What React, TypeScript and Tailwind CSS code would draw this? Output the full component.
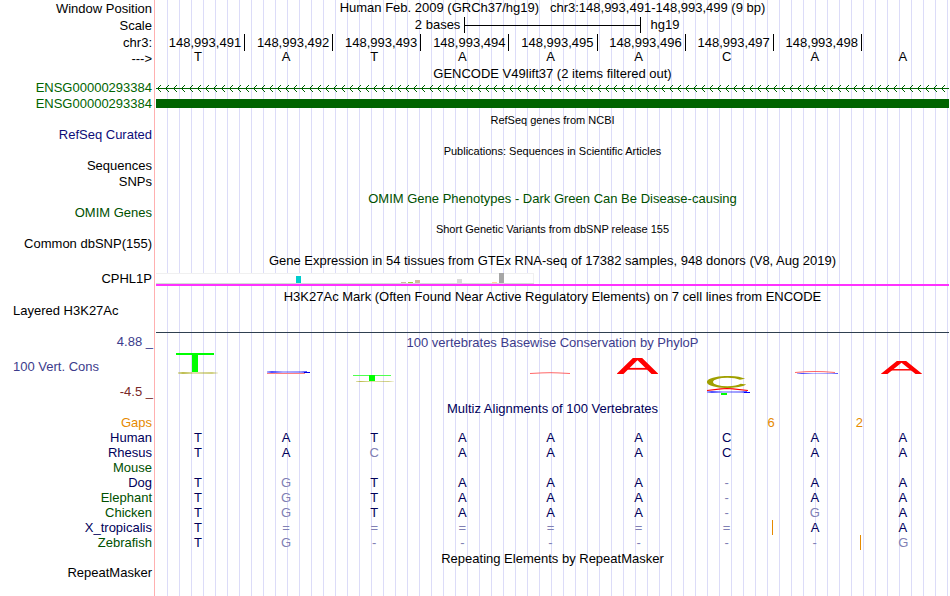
import React from 'react';
import clsx from 'clsx';

const POSITIONS = [
  '148,993,491',
  '148,993,492',
  '148,993,493',
  '148,993,494',
  '148,993,495',
  '148,993,496',
  '148,993,497',
  '148,993,498',
  '',
];

const REFERENCE = 'TATAAACAA';

interface Species {
  name: string;
  color: string;
  bases: string;
  // index of the base that is followed by an insertion
  insertAfter?: number;
}

const NAVY = 'text-[#00005a]';
const GREEN = 'text-[#005000]';

const SPECIES: Species[] = [
  { name: 'Human', color: NAVY, bases: 'TATAAACAA' },
  { name: 'Rhesus', color: NAVY, bases: 'TACAAACAA' },
  { name: 'Mouse', color: GREEN, bases: '         ' },
  { name: 'Dog', color: NAVY, bases: 'TGTAAA-AA' },
  { name: 'Elephant', color: GREEN, bases: 'TGTAAA-AA' },
  { name: 'Chicken', color: GREEN, bases: 'TGTAAA-GA' },
  { name: 'X_tropicalis', color: NAVY, bases: 'T======AA', insertAfter: 6 },
  { name: 'Zebrafish', color: GREEN, bases: 'TG------G', insertAfter: 7 },
];

const GAPS = ['', '', '', '', '', '', '6', '2', ''];

interface TrackProps {
  label: string;
  color?: string;
  className?: string;
  children?: React.ReactNode;
}

const Track: React.FC<TrackProps> = ({ label, color, className, children }) => (
  <div className={clsx('flex', className ?? 'h-4 leading-4')}>
    <div className={clsx('w-[156px] shrink-0 pr-1 text-right', color)}>
      {label}
    </div>
    <div className="min-w-0 flex-1">{children}</div>
  </div>
);

interface TitleProps {
  small?: boolean;
  color?: string;
  children: React.ReactNode;
}

const Title: React.FC<TitleProps> = ({ small, color, children }) => (
  <h2
    className={clsx(
      'ml-[156px] h-[15px] text-center leading-[17px] whitespace-nowrap',
      small && 'text-[11px]',
      color
    )}
  >
    {children}
  </h2>
);

const StrandLine = () => (
  <svg className="block h-4 w-full" shapeRendering="crispEdges">
    <defs>
      <pattern id="strand" width="8" height="16" patternUnits="userSpaceOnUse">
        <g fill="#006400">
          <rect x="0" y="8" width="8" height="1" />
          <rect x="2" y="7" width="1" height="1" />
          <rect x="2" y="9" width="1" height="1" />
          <rect x="3" y="6" width="1" height="1" />
          <rect x="3" y="10" width="1" height="1" />
          <rect x="4" y="5" width="1" height="1" />
          <rect x="4" y="11" width="1" height="1" />
        </g>
      </pattern>
    </defs>
    <rect width="100%" height="16" fill="url(#strand)" />
  </svg>
);

const ExpressionBars = () => (
  <svg
    className="block h-[11px] w-[378px]"
    viewBox="0 0 378 11"
    shapeRendering="crispEdges"
  >
    <rect width="378" height="11" fill="#f0f0f0" />
    <rect y="1" width="377" height="9" fill="#ffffff" />
    <rect y="10" width="378" height="1" fill="#d4dcd4" />
    <rect x="140" y="3" width="5" height="7" fill="#00cdcd" />
    <rect x="245" y="9" width="5" height="1" fill="#cdb79e" />
    <rect x="252" y="9" width="5" height="1" fill="#9acd32" />
    <rect x="259" y="7" width="5" height="3" fill="#cdb79e" />
    <rect x="301" y="6" width="5" height="4" fill="#d9d9d9" />
    <rect x="336" y="9" width="5" height="1" fill="#ffd39b" />
    <rect x="343" y="0" width="5" height="10" fill="#a6a6a6" />
  </svg>
);

interface PeakProps {
  x: number;
  y: number;
  height: number;
}

const Peak: React.FC<PeakProps> = ({ x, y, height }) => (
  <svg
    x={x}
    y={y}
    width="41"
    height={height}
    viewBox="0 0 16 16"
    preserveAspectRatio="none"
  >
    <g fill="none" stroke="#ff0000">
      <polyline points="0.8,17 7.2,0.8 8.8,0.8 15.2,17" strokeWidth="2.5" />
      <line x1="4" y1="10.8" x2="12" y2="10.8" strokeWidth="1.8" />
    </g>
  </svg>
);

// x starts at the left edge of the first base, y just under the title
const Conservation = () => (
  <svg
    className="block h-[50px] w-full"
    viewBox="0 0 793 50"
    preserveAspectRatio="none"
  >
    <defs>
      <linearGradient id="olive">
        <stop offset="0" stopColor="#a0a000" stopOpacity="0.3" />
        <stop offset="0.12" stopColor="#a0a000" stopOpacity="0.7" />
        <stop offset="0.4" stopColor="#a0a000" stopOpacity="0.3" />
        <stop offset="0.85" stopColor="#a0a000" stopOpacity="0.5" />
        <stop offset="1" stopColor="#a0a000" stopOpacity="0.1" />
      </linearGradient>
      <linearGradient id="blue">
        <stop offset="0" stopColor="#0000ff" stopOpacity="0.3" />
        <stop offset="0.12" stopColor="#0000ff" stopOpacity="0.7" />
        <stop offset="0.4" stopColor="#0000ff" stopOpacity="0.3" />
        <stop offset="0.85" stopColor="#0000ff" stopOpacity="0.4" />
        <stop offset="1" stopColor="#0000ff" stopOpacity="0.7" />
      </linearGradient>
    </defs>

    <rect x="20" y="3" width="38" height="2" fill="#00ff00" />
    <rect x="36" y="4" width="6" height="18" fill="#00ff00" />
    <rect x="22" y="22" width="40" height="2" fill="url(#olive)" />

    <rect x="111" y="21" width="40" height="2" fill="url(#blue)" />
    <rect x="148" y="22" width="6" height="1" fill="#0000e0" />
    <rect x="111" y="23" width="38" height="1" fill="#ff8080" />

    <rect x="197" y="25" width="38" height="1" fill="#50ff50" />
    <rect x="213" y="25" width="6" height="6" fill="#00ff00" />
    <rect x="200" y="31" width="38" height="1" fill="url(#olive)" />

    <polyline
      points="374,23.5 386,22.9 394,22.7 402,22.9 414,23.5"
      fill="none"
      stroke="#ff4040"
      strokeWidth="0.8"
    />

    <Peak x={461} y={8} height={16} />

    <svg
      x="551"
      y="26"
      width="41"
      height="12"
      viewBox="0 0 14 14"
      preserveAspectRatio="none"
    >
      <circle
        cx="7"
        cy="7"
        r="6"
        fill="none"
        stroke="#a0a000"
        strokeWidth="2.1"
        pathLength="100"
        strokeDasharray="86 14"
        strokeDashoffset="-7"
      />
    </svg>
    <polyline
      points="551,40.5 565,38.8 571,38.5 577,38.8 592,40.5"
      fill="none"
      stroke="#ff0000"
      strokeWidth="1.2"
    />
    <rect x="551" y="41" width="40" height="2" fill="url(#blue)" />
    <rect x="588" y="42" width="6" height="1" fill="#0000ff" />
    <rect x="565" y="43" width="6" height="2" fill="#00ff00" />

    <polyline
      points="639,22.5 650,21.7 659,21.5 668,21.7 679,22.5"
      fill="none"
      stroke="#ff4040"
      strokeWidth="0.8"
    />
    <rect x="641" y="23" width="41" height="1" fill="url(#blue)" />

    <Peak x={725} y={11} height={13} />
  </svg>
);

const Alignment = () => (
  <table className="w-full table-fixed">
    <colgroup>
      <col className="w-[156px]" />
      <col span={9} />
    </colgroup>
    <tbody>
      <tr className="h-[15px] text-[#e68a00]">
        <th scope="row" className="p-0 pr-1 text-right font-normal">
          Gaps
        </th>
        {GAPS.map((gap, i) => (
          <td key={i} className="p-0 text-right">
            <span className="-mr-0.5">{gap}</span>
          </td>
        ))}
      </tr>
      {SPECIES.map((species) => (
        <tr key={species.name} className="h-[15px]">
          <th
            scope="row"
            className={clsx('p-0 pr-1 text-right font-normal', species.color)}
          >
            {species.name}
          </th>
          {species.bases.split('').map((base, i) => (
            <td
              key={i}
              className={clsx(
                'p-0 pr-1 text-center',
                base === REFERENCE[i] ? 'text-[#00005a]' : 'text-[#8080b4]',
                species.insertAfter === i && 'border-r border-[#e68a00]'
              )}
            >
              {base}
            </td>
          ))}
        </tr>
      ))}
    </tbody>
  </table>
);

export default function App() {
  return (
    <main className="min-h-screen bg-white bg-[linear-gradient(90deg,white_154px,#ffb0b0_154px,#ffb0b0_155px,white_155px,white_156px,transparent_156px),repeating-linear-gradient(90deg,transparent_0px,transparent_11px,#dcdcf8_11px,#dcdcf8_12px)] pr-px font-['Liberation_Sans',Arial,sans-serif] text-[13px] leading-[15px] text-black">
      <Track label="Window Position" className="h-[17px] leading-[17px]">
        <h1 className="text-center leading-4 whitespace-pre">
          {'Human Feb. 2009 (GRCh37/hg19)   chr3:148,993,491-148,993,499 (9 bp)'}
        </h1>
      </Track>
      <Track label="Scale" className="h-[17px] leading-[17px]">
        <div className="grid h-4 grid-cols-[7fr_4fr_7fr] leading-4">
          <div className="pr-1 text-right">2 bases</div>
          <div className="flex items-center border-x border-black">
            <div className="h-px w-full bg-black" />
          </div>
          <div className="pl-2.5">hg19</div>
        </div>
      </Track>
      <Track label="chr3:" className="h-4 leading-[17px]">
        <div className="grid h-[15px] grid-cols-9">
          {POSITIONS.map((position, i) => (
            <div
              key={i}
              className={clsx(
                '-mr-px pr-[3px] text-right',
                position && 'border-r border-black'
              )}
            >
              {position}
            </div>
          ))}
        </div>
      </Track>
      <Track label="--->" className="h-[15px] leading-[17px]">
        <div className="grid grid-cols-9 leading-[13px]">
          {REFERENCE.split('').map((base, i) => (
            <div key={i} className="pr-1 text-center">
              {base}
            </div>
          ))}
        </div>
      </Track>

      <Title>GENCODE V49lift37 (2 items filtered out)</Title>
      <Track label="ENSG00000293384" color="text-[#006400]">
        <StrandLine />
      </Track>
      <Track label="ENSG00000293384" color="text-[#006400]">
        <div className="py-[3px]">
          <div className="h-[9px] bg-[#006400]" />
        </div>
      </Track>

      <Title small>RefSeq genes from NCBI</Title>
      <Track label="RefSeq Curated" color="text-[#0c0c78]" />

      <Title small>Publications: Sequences in Scientific Articles</Title>
      <Track label="Sequences" />
      <Track label="SNPs" />

      <Title color="text-[#005000]">
        OMIM Gene Phenotypes - Dark Green Can Be Disease-causing
      </Title>
      <Track label="OMIM Genes" color="text-[#005000]" />

      <Title small>Short Genetic Variants from dbSNP release 155</Title>
      <Track label="Common dbSNP(155)" />

      <Title>
        Gene Expression in 54 tissues from GTEx RNA-seq of 17382 samples, 948
        donors (V8, Aug 2019)
      </Title>
      <Track label="CPHL1P" className="h-[21px] leading-[23px]">
        <div className="border-b-2 border-[#ff32ff] pt-[6px]">
          <ExpressionBars />
        </div>
      </Track>

      <Title>
        H3K27Ac Mark (Often Found Near Active Regulatory Elements) on 7 cell
        lines from ENCODE
      </Title>
      <div className="flex h-[31px]">
        <div className="w-[156px] shrink-0 pl-[13px]">Layered H3K27Ac</div>
        <div className="mb-px flex-1 border-b border-[#2f4050]" />
      </div>

      <div className="flex">
        <div className="flex h-[65px] w-[156px] shrink-0 flex-col justify-between pr-[3px] text-right text-[#3c3c8c]">
          <div>4.88 _</div>
          <div className="pl-[13px] text-left">100 Vert. Cons</div>
          <div className="text-[#782828]">-4.5 _</div>
        </div>
        <div className="flex-1">
          <h2 className="h-4 text-center leading-[17px] text-[#3c3c8c]">
            100 vertebrates Basewise Conservation by PhyloP
          </h2>
          <Conservation />
        </div>
      </div>

      <Title color="text-[#00005a]">Multiz Alignments of 100 Vertebrates</Title>
      <Alignment />

      <Title>Repeating Elements by RepeatMasker</Title>
      <Track label="RepeatMasker" />
    </main>
  );
}
